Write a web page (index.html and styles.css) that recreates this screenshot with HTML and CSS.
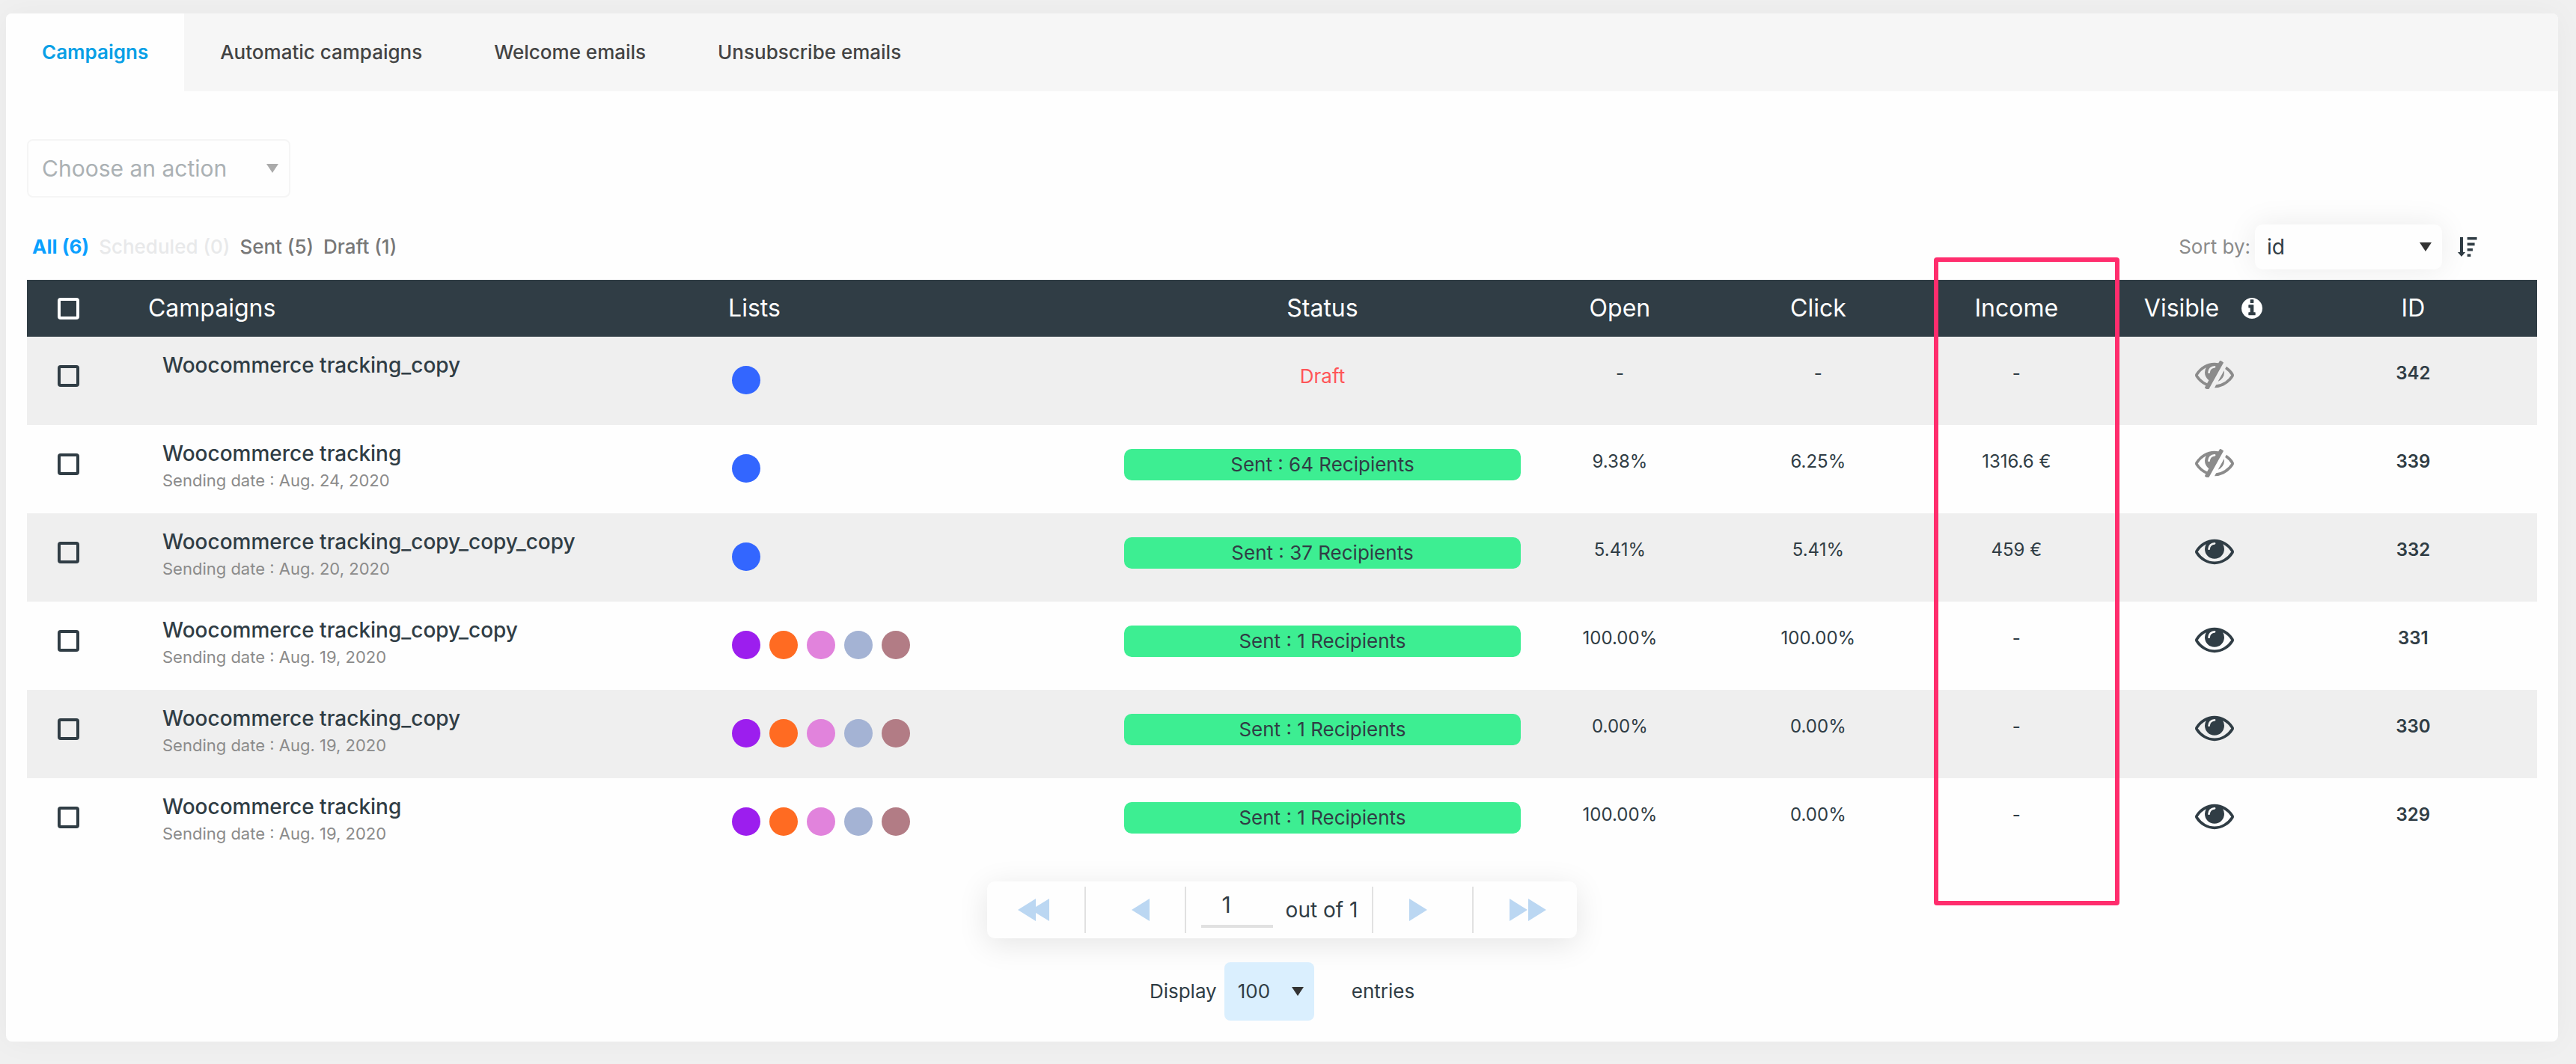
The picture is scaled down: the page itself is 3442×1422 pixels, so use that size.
FILE: index.html
```
<!DOCTYPE html>
<html lang="en">
<head>
  <meta charset="UTF-8">
  <meta name="viewport" content="width=device-width, initial-scale=1.0">
  <title>Campaigns</title>
  <link rel="stylesheet" href="styles.css">
</head>
<body>
  <!-- shared icons -->
  <svg class="sprite" aria-hidden="true">
    <symbol id="eye" viewBox="0 256 1792 1344">
      <path d="M1664 960q-152-236-381-353 61 104 61 225 0 185-131.5 316.5t-316.5 131.5-316.5-131.5-131.5-316.5q0-121 61-225-229 117-381 353 133 205 333.5 326.5t434.5 121.5 434.5-121.5 333.5-326.5zm-720-384q0-20-14-34t-34-14q-125 0-214.5 89.5t-89.5 214.5q0 20 14 34t34 14 34-14 14-34q0-86 61-147t147-61q20 0 34-14t14-34zm848 384q0 34-20 69-140 230-376.5 368.5t-499.5 138.5-499.5-139-376.5-368q-20-35-20-69t20-69q140-229 376.5-368t499.5-139 499.5 139 376.5 368q20 35 20 69z"/>
    </symbol>
    <symbol id="eye-slash" viewBox="0 256 1792 1344">
      <path d="M555 1335l78-141q-87-63-136-159t-49-203q0-121 61-225-229 117-381 353 167 258 427 375zm389-759q0-20-14-34t-34-14q-125 0-214.5 89.5t-89.5 214.5q0 20 14 34t34 14 34-14 14-34q0-86 61-147t147-61q20 0 34-14t14-34zm363-191q0 7-1 9-106 189-316 567t-315 566l-49 89q-10 16-28 16-12 0-134-70-16-10-16-28 0-12 44-87-143-65-263.5-173t-208.5-245q-20-31-20-69t20-69q153-235 380-371t496-136q89 0 180 17l54-97q10-16 28-16 5 0 18 6t31 15.5 33 18.5 31.5 18.5 19.5 11.5q16 10 16 27zm37 447q0 139-79 253.5t-209 164.5l280-502q8 45 8 84zm448 128q0 35-20 69-39 64-109 145-150 172-347.5 267t-419.5 95l74-132q212-18 392.5-137t301.5-307q-115-179-282-294l63-112q95 64 182.5 153t144.5 184q20 34 20 69z"/>
    </symbol>
    <symbol id="info" viewBox="128 128 1536 1536">
      <path d="M1152 1376v-160q0-14-9-23t-23-9h-96v-512q0-14-9-23t-23-9h-320q-14 0-23 9t-9 23v160q0 14 9 23t23 9h96v320h-96q-14 0-23 9t-9 23v160q0 14 9 23t23 9h448q14 0 23-9t9-23zm-128-896v-192q0-14-9-23t-23-9h-192q-14 0-23 9t-9 23v192q0 14 9 23t23 9h192q14 0 23-9t9-23zm640 416q0 209-103 385.5t-279.5 279.5-385.5 103-385.5-103-279.5-279.5-103-385.5 103-385.5 279.5-279.5 385.5-103 385.5 103 279.5 279.5 103 385.5z"/>
    </symbol>
    <symbol id="sort-desc" viewBox="0 0 26 26">
      <path d="M3 0h4v20h3.2L5 26 0 20h3zM12.7 0H25.6v3.6H12.7zM12.7 7.6H22.6v3.6H12.7zM12.7 15H20v3.6H12.7zM12.7 22.4H17.4V26H12.7z"/>
    </symbol>
  </svg>

  <div class="panel">
    <nav class="tabs">
      <a class="tab active" href="#">Campaigns</a>
      <a class="tab" href="#">Automatic campaigns</a>
      <a class="tab" href="#">Welcome emails</a>
      <a class="tab" href="#">Unsubscribe emails</a>
    </nav>

    <div class="content">
      <div class="select select-action">
        <select id="bulkAction" aria-label="Choose an action">
          <option>Choose an action</option>
        </select>
      </div>

      <div class="toolbar">
        <div class="filters">
          <a class="filter current" href="#">All (6)</a>
          <a class="filter empty" href="#">Scheduled (0)</a>
          <a class="filter" href="#">Sent (5)</a>
          <a class="filter" href="#">Draft (1)</a>
        </div>
        <div class="sort">
          <label for="sortBy">Sort by:</label>
          <div class="select select-sort">
            <select id="sortBy">
              <option>id</option>
            </select>
          </div>
          <button class="sort-button" type="button" aria-label="Sort order"><svg><use href="#sort-desc"/></svg></button>
        </div>
      </div>

      <div class="table-wrap">
        <table class="campaigns">
          <colgroup>
            <col class="col-check">
            <col class="col-name">
            <col class="col-lists">
            <col class="col-status">
            <col class="col-stat">
            <col class="col-stat">
            <col class="col-stat">
            <col class="col-stat">
            <col class="col-id">
          </colgroup>
          <thead>
            <tr>
              <th class="check"><input type="checkbox" aria-label="Select all"></th>
              <th class="left">Campaigns</th>
              <th class="left">Lists</th>
              <th>Status</th>
              <th>Open</th>
              <th>Click</th>
              <th>Income</th>
              <th><div class="visible-head">Visible <svg class="info"><use href="#info"/></svg></div></th>
              <th class="id">ID</th>
            </tr>
          </thead>
          <tbody>
            <tr>
              <td class="check"><input type="checkbox" aria-label="Select 342"></td>
              <td class="name"><strong>Woocommerce tracking_copy</strong></td>
              <td class="lists"><div class="dots"><i class="dot blue"></i></div></td>
              <td class="status"><span class="draft">Draft</span></td>
              <td>-</td>
              <td>-</td>
              <td>-</td>
              <td class="visible"><svg class="eye off"><use href="#eye-slash"/></svg></td>
              <td class="id">342</td>
            </tr>
            <tr>
              <td class="check"><input type="checkbox" aria-label="Select 339"></td>
              <td class="name"><strong>Woocommerce tracking</strong><small>Sending date : Aug. 24, 2020</small></td>
              <td class="lists"><div class="dots"><i class="dot blue"></i></div></td>
              <td class="status"><span class="sent">Sent : 64 Recipients</span></td>
              <td>9.38%</td>
              <td>6.25%</td>
              <td>1316.6 €</td>
              <td class="visible"><svg class="eye off"><use href="#eye-slash"/></svg></td>
              <td class="id">339</td>
            </tr>
            <tr>
              <td class="check"><input type="checkbox" aria-label="Select 332"></td>
              <td class="name"><strong>Woocommerce tracking_copy_copy_copy</strong><small>Sending date : Aug. 20, 2020</small></td>
              <td class="lists"><div class="dots"><i class="dot blue"></i></div></td>
              <td class="status"><span class="sent">Sent : 37 Recipients</span></td>
              <td>5.41%</td>
              <td>5.41%</td>
              <td>459 €</td>
              <td class="visible"><svg class="eye"><use href="#eye"/></svg></td>
              <td class="id">332</td>
            </tr>
            <tr>
              <td class="check"><input type="checkbox" aria-label="Select 331"></td>
              <td class="name"><strong>Woocommerce tracking_copy_copy</strong><small>Sending date : Aug. 19, 2020</small></td>
              <td class="lists"><div class="dots"><i class="dot purple"></i><i class="dot orange"></i><i class="dot pink"></i><i class="dot steel"></i><i class="dot rose"></i></div></td>
              <td class="status"><span class="sent">Sent : 1 Recipients</span></td>
              <td>100.00%</td>
              <td>100.00%</td>
              <td>-</td>
              <td class="visible"><svg class="eye"><use href="#eye"/></svg></td>
              <td class="id">331</td>
            </tr>
            <tr>
              <td class="check"><input type="checkbox" aria-label="Select 330"></td>
              <td class="name"><strong>Woocommerce tracking_copy</strong><small>Sending date : Aug. 19, 2020</small></td>
              <td class="lists"><div class="dots"><i class="dot purple"></i><i class="dot orange"></i><i class="dot pink"></i><i class="dot steel"></i><i class="dot rose"></i></div></td>
              <td class="status"><span class="sent">Sent : 1 Recipients</span></td>
              <td>0.00%</td>
              <td>0.00%</td>
              <td>-</td>
              <td class="visible"><svg class="eye"><use href="#eye"/></svg></td>
              <td class="id">330</td>
            </tr>
            <tr>
              <td class="check"><input type="checkbox" aria-label="Select 329"></td>
              <td class="name"><strong>Woocommerce tracking</strong><small>Sending date : Aug. 19, 2020</small></td>
              <td class="lists"><div class="dots"><i class="dot purple"></i><i class="dot orange"></i><i class="dot pink"></i><i class="dot steel"></i><i class="dot rose"></i></div></td>
              <td class="status"><span class="sent">Sent : 1 Recipients</span></td>
              <td>100.00%</td>
              <td>0.00%</td>
              <td>-</td>
              <td class="visible"><svg class="eye"><use href="#eye"/></svg></td>
              <td class="id">329</td>
            </tr>
          </tbody>
        </table>
        <div class="highlight"></div>
      </div>

      <div class="pager">
        <button class="pager-button first" type="button" aria-label="First page">
          <svg viewBox="0 0 42 30"><path d="M0 15L24 0v11L42 0v30L24 19v11z"/></svg>
        </button>
        <button class="pager-button prev" type="button" aria-label="Previous page">
          <svg viewBox="0 0 24 30"><path d="M0 15L24 0v30z"/></svg>
        </button>
        <div class="pager-page">
          <input id="page" type="text" value="1" aria-label="Page">
          <label for="page">out of 1</label>
        </div>
        <button class="pager-button next" type="button" aria-label="Next page">
          <svg viewBox="0 0 24 30"><path d="M24 15L0 0v30z"/></svg>
        </button>
        <button class="pager-button last" type="button" aria-label="Last page">
          <svg viewBox="0 0 49 30"><path d="M0 0l24 15L0 30zM25 0l24 15-24 15z"/></svg>
        </button>
      </div>

      <div class="display">
        <label for="entries">Display</label>
        <div class="select select-entries">
          <select id="entries">
            <option>100</option>
          </select>
        </div>
        <span class="entries">entries</span>
      </div>
    </div>
  </div>
</body>
</html>
```
FILE: styles.css
```
* {
  box-sizing: border-box;
}
body {
  margin: 0;
  padding: 18px 24px 30px 8px;
  background-color: #f0f0f0;
  color: #303d45;
  font-family: Inter, "Open Sans", sans-serif;
  font-size: 26px;
  line-height: 36px;
}
.sprite {
  display: none;
}
svg {
  display: block;
  fill: currentColor;
}
a {
  color: inherit;
  text-decoration: none;
}
button,
input,
select {
  font: inherit;
  color: inherit;
  margin: 0;
}
button {
  padding: 0;
  border: none;
  background: none;
  cursor: pointer;
}
.panel {
  background-color: #fefefe;
  border-radius: 8px;
  box-shadow: 0 0 40px rgba(0, 0, 0, 0.04);
}

/* tabs */
.tabs {
  display: flex;
  background-color: #f6f6f6;
  border-radius: 8px 8px 0 0;
  color: #444;
  font-weight: 500;
}
.tab {
  padding: 34px 48px;
}
.tab.active {
  background-color: #fefefe;
  border-radius: 8px 0 0 0;
  color: #09a0e6;
  font-weight: 600;
}
.content {
  padding: 64px 28px 28px;
}

/* drop-downs */
.select {
  position: relative;
}
.select select {
  display: block;
  width: 100%;
  height: 100%;
  border: none;
  background: none;
  appearance: none;
}
.select::after {
  content: "";
  position: absolute;
  top: 50%;
  right: 14px;
  margin-top: -6px;
  border: 8px solid transparent;
  border-top: 12px solid #333;
  border-bottom: none;
  pointer-events: none;
}
.select-action {
  width: 352px;
  height: 78px;
  border: 2px solid #f5f5f5;
  border-radius: 8px;
  color: #abb1b4;
  font-size: 30px;
}
.select-action select {
  padding: 0 18px;
}
.select-action::after {
  border-top-color: #aaa;
}
.select-sort {
  width: 250px;
  height: 60px;
  background-color: #fefefe;
  border-radius: 10px;
  box-shadow: 0 0 40px rgba(0, 0, 0, 0.08);
  color: #303d45;
  font-size: 28px;
}
.select-sort select {
  padding: 0 16px;
}
.select-entries {
  width: 120px;
  height: 78px;
  background-color: #daeffe;
  border-radius: 8px;
}
.select-entries select {
  padding: 0 18px;
}

/* filters and sort order */
.toolbar {
  display: flex;
  justify-content: space-between;
  align-items: center;
  margin: 36px 0 14px;
}
.filters {
  display: flex;
  gap: 13px;
  padding-left: 7px;
  color: #777;
  font-weight: 500;
}
.filter.current {
  color: #0aa0ff;
  font-weight: 700;
}
.filter.empty {
  color: #e8e9ea;
}
.sort {
  display: flex;
  align-items: center;
  gap: 6px;
  padding-right: 80px;
  color: #8b8b8b;
}
.sort-button {
  margin-left: 15px;
  color: #303d45;
}
.sort-button svg {
  width: 26px;
  height: 26px;
}

/* table */
.table-wrap {
  position: relative;
}
.campaigns {
  width: 100%;
  table-layout: fixed;
  border-collapse: collapse;
  text-align: center;
}
.col-check {
  width: 4.83%;
}
.col-name {
  width: 23.11%;
}
.col-lists {
  width: 15.77%;
}
.col-status {
  width: 15.8%;
}
.col-stat {
  width: 7.9%;
}
.campaigns th {
  height: 76px;
  padding: 0;
  background-color: #303d45;
  color: #fff;
  font-size: 32px;
  font-weight: 400;
}
.campaigns th.left {
  text-align: left;
}
.campaigns td {
  height: 118px;
  padding: 31px 0 0;
  font-size: 24px;
  vertical-align: top;
}
.campaigns tbody tr:nth-child(odd) {
  background-color: #efefef;
}
.campaigns .check {
  padding-left: 41px;
  text-align: left;
}
.campaigns td.check {
  padding-top: 38px;
}
.check input {
  display: block;
  width: 29px;
  height: 29px;
  border: 4px solid #303d45;
  border-radius: 4px;
  appearance: none;
}
th.check input {
  border-color: #fff;
}
.campaigns td.name {
  padding: 20px 0 0 19px;
  text-align: left;
}
.name strong,
.name small {
  display: block;
}
.name strong {
  font-size: 28px;
  font-weight: 500;
}
.name small {
  color: #8b8b8b;
  font-size: 22px;
}
.campaigns td.lists {
  padding: 39px 0 0 5px;
}
.dots {
  display: flex;
  gap: 12px;
}
.dot {
  width: 38px;
  height: 38px;
  border-radius: 50%;
}
.blue {
  background-color: #3366ff;
}
.purple {
  background-color: #9c1eee;
}
.orange {
  background-color: #ff6b22;
}
.pink {
  background-color: #e183dc;
}
.steel {
  background-color: #a4b3d4;
}
.rose {
  background-color: #b27c85;
}
.campaigns td.status {
  padding-top: 32px;
  font-size: 26px;
}
.status span {
  display: block;
  border-radius: 10px;
  line-height: 42px;
}
.sent {
  background-color: #3dee92;
}
.draft {
  color: #ff5558;
}
.visible-head {
  display: flex;
  align-items: center;
  gap: 30px;
  padding-left: 38px;
}
.info {
  width: 28px;
  height: 28px;
}
.eye {
  width: 52px;
  height: 39px;
  margin: 0 auto;
}
.eye.off {
  color: #8b8b8b;
}
.campaigns .id {
  padding-right: 33px;
}
.campaigns td.id {
  font-weight: 600;
}

/* frame round the income column */
.highlight {
  position: absolute;
  top: -30px;
  bottom: -52px;
  left: 75.97%;
  width: 7.4%;
  border: 6px solid #ff2d6d;
  border-radius: 4px;
}

/* pagination */
.pager {
  display: flex;
  align-items: center;
  width: fit-content;
  height: 76px;
  margin: 20px auto 32px;
  background-color: #fefefe;
  border-radius: 10px;
  box-shadow: 0 8px 40px rgba(0, 0, 0, 0.1);
  font-size: 28px;
}
.pager-button,
.pager-page {
  display: flex;
  align-items: center;
  height: 62px;
}
.pager-button {
  color: #bbd7f2;
}
.pager-button svg {
  height: 30px;
}
.first {
  padding: 0 47px 0 41px;
}
.prev {
  padding: 0 47px 0 61px;
  border-left: 2px solid #e1e1e1;
}
.next {
  padding: 0 60px 0 48px;
}
.last {
  padding: 0 41px 0 48px;
}
.next,
.last {
  border-left: 2px solid #e1e1e1;
}
.pager-page {
  gap: 17px;
  padding: 0 19px 0 20px;
  border-left: 2px solid #e1e1e1;
}
.pager-page input {
  width: 96px;
  height: 48px;
  padding: 0 28px 10px;
  border: none;
  border-bottom: 4px solid #e1e1e1;
  background: none;
  font-size: 30px;
}

/* entries per page */
.display {
  display: flex;
  justify-content: center;
  align-items: center;
}
.display label {
  margin-right: 10px;
}
.entries {
  margin-left: 50px;
}
```
